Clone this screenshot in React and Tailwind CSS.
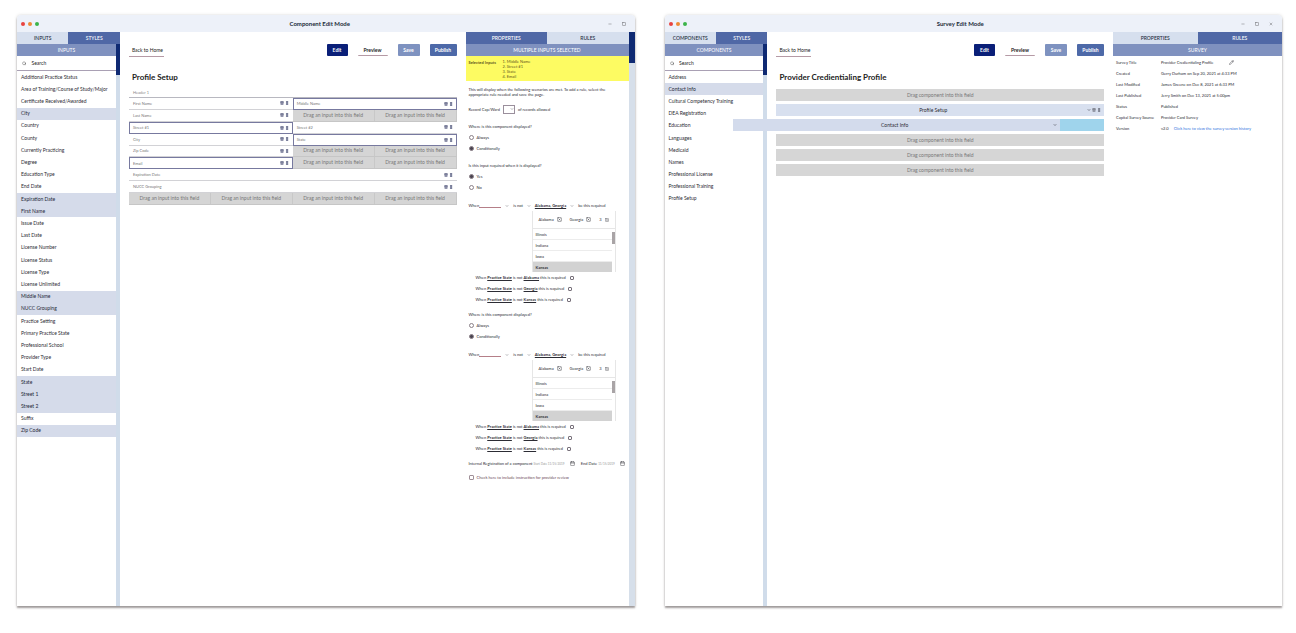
import { useState } from "react";
import { Search, Trash2, GripVertical, ChevronDown, Calendar, Pencil, Minus, Square, X, XSquare } from "lucide-react";

const INPUTS = [
  ["Additional Practice Status"], ["Area of Training/Course of Study/Major"], ["Certificate Received/Awarded"],
  ["City", true], ["Country"], ["County"], ["Currently Practicing"], ["Degree"], ["Education Type"], ["End Date"],
  ["Expiration Date", true], ["First Name", true], ["Issue Date"], ["Last Date"], ["License Number"],
  ["License Status"], ["License Type"], ["License Unlimited"], ["Middle Name", true], ["NUCC Grouping", true],
  ["Practice Setting"], ["Primary Practice State"], ["Professional School"], ["Provider Type"], ["Start Date"],
  ["State", true], ["Street 1", true], ["Street 2", true], ["Suffix"], ["Zip Code", true],
];

const COMPONENTS = [
  ["Address"], ["Contact Info", true], ["Cultural Competency Training"], ["DEA Registration"], ["Education"],
  ["Languages"], ["Medicaid"], ["Names"], ["Professional License"], ["Professional Training"], ["Profile Setup"],
];

const META = [
  ["Survey Title", "Provider Credientialing Profile"],
  ["Created", "Gerry Durham on Sep 20, 2021 at 4:33 PM"],
  ["Last Modified", "James Greene on Dec 8, 2021 at 6:33 PM"],
  ["Last Published", "Jerry Smith on Dec 13, 2021 at 5:00pm"],
  ["Status", "Published"],
  ["Capital Survey Source", "Provider Card Survey"],
];

function Window({ title, closable, children }) {
  return (
    <section className="flex min-w-0 flex-1 flex-col overflow-hidden rounded-t-[4px] bg-white shadow-[0_2px_2px_rgba(80,70,70,0.5),0_0_3px_rgba(120,120,120,0.3)]">
      <header className="grid h-[17px] shrink-0 grid-cols-3 items-center bg-[#edf1f9] px-[4px]">
        <div className="flex gap-[3px]">
          <span className="size-[4px] rounded-full bg-[#e8433f]" />
          <span className="size-[4px] rounded-full bg-[#ee8a35]" />
          <span className="size-[4px] rounded-full bg-[#3bb44a]" />
        </div>
        <h1 className={closable
          ? "pr-[26px] text-center text-[6px] leading-[10px] font-bold text-[#222b3a]"
          : "pr-[12px] text-center text-[6px] leading-[10px] font-bold text-[#222b3a]"}>{title}</h1>
        <div className="flex justify-end gap-[10px] pr-[5px] text-[#333]">
          <Minus size={4} />
          <Square size={4} />
          {closable && <X size={4} />}
        </div>
      </header>
      <div className="flex flex-1">{children}</div>
    </section>
  );
}

function Tabs({ names, dark }) {
  return (
    <div className="flex h-[12px] shrink-0 text-[5px] leading-[6px] font-medium">
      {names.map((n, i) => (
        <button key={n} className={i === dark ? "flex-1 bg-[#5068a6] text-white" : "flex-1 bg-[#d6dfee] text-[#222b3a]"}>{n}</button>
      ))}
    </div>
  );
}

function Banner({ children }) {
  return <h2 className="flex h-[12px] shrink-0 items-center justify-center bg-[#7f91bf] text-[5px] leading-[6px] text-white">{children}</h2>;
}

function Scroll({ wide }) {
  return (
    <div className={wide ? "w-[6px] shrink-0 bg-[#d6dfea]" : "w-[4px] shrink-0 bg-[#d0dcea]"}>
      <div className="h-[31px] bg-[#0f2a73]" />
    </div>
  );
}

function Sidebar({ tabs, title, items, listClass }) {
  const [query, setQuery] = useState("");
  return (
    <aside className="flex w-1/6 shrink-0 flex-col">
      <Tabs names={tabs} dark={1} />
      <div className="flex flex-1">
        <div className="min-w-0 flex-1">
          <Banner>{title}</Banner>
          <label className="flex h-[15px] items-center gap-[5px] border-b border-[#a9a0b4] px-[5px] text-[#333]">
            <Search size={5} />
            <input value={query} onChange={(e) => setQuery(e.target.value)} placeholder="Search" aria-label="Search"
              className="w-full text-[5px] leading-[6px] outline-none placeholder:text-[#222]" />
          </label>
          <ul className={listClass}>
            {items.map(([name, on]) => (
              <li key={name} className={on ? "flex flex-1 items-center bg-[#d5dbea] px-[4px] text-[#1f2838]" : "flex flex-1 items-center px-[4px]"}>{name}</li>
            ))}
          </ul>
        </div>
        <Scroll />
      </div>
    </aside>
  );
}

function Toolbar() {
  return (
    <div className="flex items-start justify-between text-[5px] leading-[6px]">
      <a href="#home" className="flex h-[13px] w-[35px] items-center border-b border-[#b59aa5] pl-[3px] whitespace-nowrap text-[#222]">Back to Home</a>
      <div className="flex gap-[10px] font-bold">
        <button className="h-[12px] w-[21px] rounded-[1px] bg-[#0a1f78] text-white">Edit</button>
        <button className="h-[12px] w-[30px] rounded-[1px] border-b border-[#b59aa5] bg-white text-[#222]">Preview</button>
        <button className="h-[12px] w-[22px] rounded-[1px] bg-[#7e92c0] text-white">Save</button>
        <button className="h-[12px] w-[27px] rounded-[1px] bg-[#4d69a8] text-white">Publish</button>
      </div>
    </div>
  );
}

function Field({ name, on }) {
  return (
    <div className={on
      ? "flex min-w-0 items-center justify-between border border-[#77799f] px-[3px]"
      : "flex min-w-0 items-center justify-between border-b border-[#d2d2d6] px-[4px]"}>
      <span>{name}</span>
      <span className="flex gap-px text-[#2f3560]"><Trash2 size={4} strokeWidth={3} /><GripVertical size={4} strokeWidth={3} /></span>
    </div>
  );
}

function Drops({ n = 2 }) {
  return (
    <div className="flex min-w-0 border-b border-[#c6c6c6] bg-[#d5d5d5] text-[5px] text-[#777]">
      {Array.from({ length: n }, (_, i) => (
        <div key={i} className="flex flex-1 items-center justify-center border-r border-[#c8c8c8] whitespace-nowrap">Drag an input into this field</div>
      ))}
    </div>
  );
}

function Radio({ group, label, checked }) {
  return (
    <label className="flex h-[11px] items-center gap-[3px]">
      <input type="radio" name={group} defaultChecked={checked}
        className="size-[5px] appearance-none rounded-full border border-[#8a8088] checked:bg-[#4a4450]" />
      {label}
    </label>
  );
}

function Rule({ id }) {
  return (
    <>
      <div className="mt-[7px] flex h-[11px] items-center gap-[4px] whitespace-nowrap">
        <label className="flex items-end">When
          <input aria-label="Field" className="h-[5px] w-[22px] border-b border-[#b57f88] outline-none" />
        </label>
        <ChevronDown size={4} /><span>is not</span><ChevronDown size={4} />
        <b className="underline">Alabama, Georgia</b><ChevronDown size={4} /><span>be this required</span>
      </div>
      <div className="mr-[10px] ml-auto w-[84px] border-x border-[#e6e6e6]">
        <div className="flex h-[17px] items-center justify-between px-[6px]">
          <span className="flex items-center gap-[3px]">Alabama <XSquare size={5} /></span>
          <span className="flex items-center gap-[3px]">Georgia <XSquare size={5} /></span>
          <span className="flex items-center gap-[3px]">3 <XSquare size={4} /></span>
        </div>
        <div className="flex border-t border-[#e6e6e6]">
          <ul className="flex-1">
            {["Illinois", "Indiana", "Iowa"].map((s) => (
              <li key={s} className="flex h-[11px] items-center border-b border-[#ececec] px-[3px]">{s}</li>
            ))}
            <li className="flex h-[10px] items-center bg-[#d2d2d2] px-[3px] font-bold">Kansas</li>
          </ul>
          <div className="w-[3px] pt-[3px]"><div className="h-[12px] bg-[#a9a4a6]" /></div>
        </div>
      </div>
      {["Alabama", "Georgia", "Kansas"].map((s) => (
        <label key={s} htmlFor={id + s} className="flex h-[11px] items-center gap-[4px] pl-[7px] whitespace-nowrap">
          <span>When <b className="underline">Practice State</b> is not <b className="underline">{s}</b> this is required</span>
          <input id={id + s} type="checkbox" className="size-[4px] appearance-none rounded-[1px] border border-[#77707a]" />
        </label>
      ))}
    </>
  );
}

function DropComponent() {
  return <div className="flex h-[12px] items-center justify-center bg-[#d6d6d6] text-[5px] text-[#777]">Drag component into this field</div>;
}

export default function App() {
  return (
    <main className="flex min-h-screen gap-[30px] bg-white pt-[15px] pr-[14px] pb-[27px] pl-[17px] font-['Lato',sans-serif] text-[4px] leading-[5px] text-[#2c2c34]">
      <Window title="Component Edit Mode">
        <Sidebar tabs={["INPUTS", "STYLES"]} title="INPUTS" items={INPUTS} listClass="flex h-[366px] flex-col text-[5px]" />
        <div className="min-w-0 flex-1 px-[9px] pt-[12px]">
          <Toolbar />
          <h2 className="mt-[15px] pl-[3px] text-[8px] leading-[11px] font-bold text-[#222]">Profile Setup</h2>
          <div className="mt-[5px] flex h-[10px] items-center border-b border-[#b8b8c0] px-[4px] text-[#888]">Header 1</div>
          <div className="grid h-[107px] auto-rows-fr text-[#777]">
            <div className="grid grid-cols-2"><Field name="First Name" /><Field name="Middle Name" on /></div>
            <div className="grid grid-cols-2"><Field name="Last Name" /><Drops /></div>
            <div className="grid grid-cols-2"><Field name="Street #1" on /><Field name="Street #2" /></div>
            <div className="grid grid-cols-2"><Field name="City" /><Field name="State" on /></div>
            <div className="grid grid-cols-2"><Field name="Zip Code" /><Drops /></div>
            <div className="grid grid-cols-2"><Field name="Email" on /><Drops /></div>
            <div className="grid"><Field name="Expiration Date" /></div>
            <div className="grid"><Field name="NUCC Grouping" /></div>
            <div className="grid"><Drops n={4} /></div>
          </div>
        </div>
        <aside className="flex w-[169px] shrink-0">
          <div className="min-w-0 flex-1">
            <Tabs names={["PROPERTIES", "RULES"]} dark={0} />
            <Banner>MULTIPLE INPUTS SELECTED</Banner>
            <div className="flex h-[25px] bg-[#fdfb62] px-[3px] py-[3px] text-[#5f5520]">
              <b className="w-[34px] pt-px">Selected Inputs</b>
              <ul className="flex flex-col justify-between leading-[5px]">
                {["Middle Name", "Street #1", "State", "Email"].map((s, i) => <li key={s}>{i + 1 + ". " + s}</li>)}
              </ul>
            </div>
            <div className="px-[3px]">
              <p className="mt-[6px] h-[10px]">This will display when the following scenarios are met. To add a rule, select the appropriate rule needed and save the page.</p>
              <label className="mt-[6px] flex h-[12px] items-center gap-[3px]">Record Cap/Ward
                <span className="flex h-[9px] w-[12px] items-center justify-end border border-[#9a8f9c]">
                  <select aria-label="Records allowed" className="w-[3px] appearance-none outline-none"><option> </option></select>
                  <ChevronDown size={4} />
                </span>
                of records allowed
              </label>
              <p className="mt-[6px] flex h-[11px] items-center">Where is this component displayed?</p>
              <Radio group="where" label="Always" />
              <Radio group="where" label="Conditionally" checked />
              <p className="mt-[6px] flex h-[11px] items-center">Is this input required when it is displayed?</p>
              <Radio group="required" label="Yes" checked />
              <Radio group="required" label="No" />
              <Rule id="first" />
              <p className="mt-[4px] flex h-[11px] items-center">Where is this component displayed?</p>
              <Radio group="where2" label="Always" />
              <Radio group="where2" label="Conditionally" checked />
              <Rule id="second" />
              <div className="mt-[4px] flex h-[11px] items-center justify-between whitespace-nowrap">
                <span>Internal Registration of a component <span className="text-[3px] text-[#999]">Start Date 11/15/2019</span></span>
                <Calendar size={5} />
                <span>End Date <span className="text-[3px] text-[#999]">11/15/2019</span></span>
                <Calendar size={5} />
              </div>
              <label className="mt-[3px] flex h-[11px] items-center gap-[3px] text-[#6a4a55]">
                <input type="checkbox" className="size-[5px] appearance-none rounded-[1px] border border-[#a09098]" />
                Check here to include instruction for provider review
              </label>
            </div>
          </div>
          <Scroll wide />
        </aside>
      </Window>

      <Window title="Survey Edit Mode" closable>
        <Sidebar tabs={["COMPONENTS", "STYLES"]} title="COMPONENTS" items={COMPONENTS} listClass="flex h-[134px] flex-col text-[5px]" />
        <div className="min-w-0 flex-1 px-[9px] pt-[12px]">
          <Toolbar />
          <h2 className="mt-[15px] pl-[3px] text-[8px] leading-[11px] font-bold text-[#222]">Provider Credientialing Profile</h2>
          <div className="mt-[6px] flex flex-col gap-[3px]">
            <DropComponent />
            <div className="flex h-[12px] items-center bg-[#d8e0ef] px-[3px] text-[5px]">
              <span className="flex-1 text-center">Profile Setup</span>
              <span className="flex gap-px"><ChevronDown size={4} strokeWidth={3} /><Trash2 size={4} /><GripVertical size={4} /></span>
            </div>
            <div className="relative z-10 -ml-[43px] flex h-[12px] text-[5px]">
              <div className="flex flex-1 items-center bg-[#d3dbec] px-[3px]">
                <span className="flex-1 text-center">Contact Info</span><ChevronDown size={4} strokeWidth={3} />
              </div>
              <div className="w-[44px] bg-[#9fd4ec]" />
            </div>
            <DropComponent /><DropComponent /><DropComponent />
          </div>
        </div>
        <aside className="w-[169px] shrink-0">
          <Tabs names={["PROPERTIES", "RULES"]} dark={1} />
          <Banner>SURVEY</Banner>
          <dl className="mt-px px-[3px] whitespace-nowrap">
            {META.map(([k, v], i) => (
              <div key={k} className="flex h-[11px] items-center">
                <dt className="w-[45px]">{k}</dt>
                <dd className="flex items-center gap-[16px]">{v}{i === 0 && <Pencil size={5} />}</dd>
              </div>
            ))}
            <div className="flex h-[11px] items-center">
              <dt className="w-[45px]">Version</dt>
              <dd className="flex gap-[5px]">v2.0 <a href="#history" className="text-[#2f72e0]">Click here to view the survey version history</a></dd>
            </div>
          </dl>
        </aside>
      </Window>
    </main>
  );
}
